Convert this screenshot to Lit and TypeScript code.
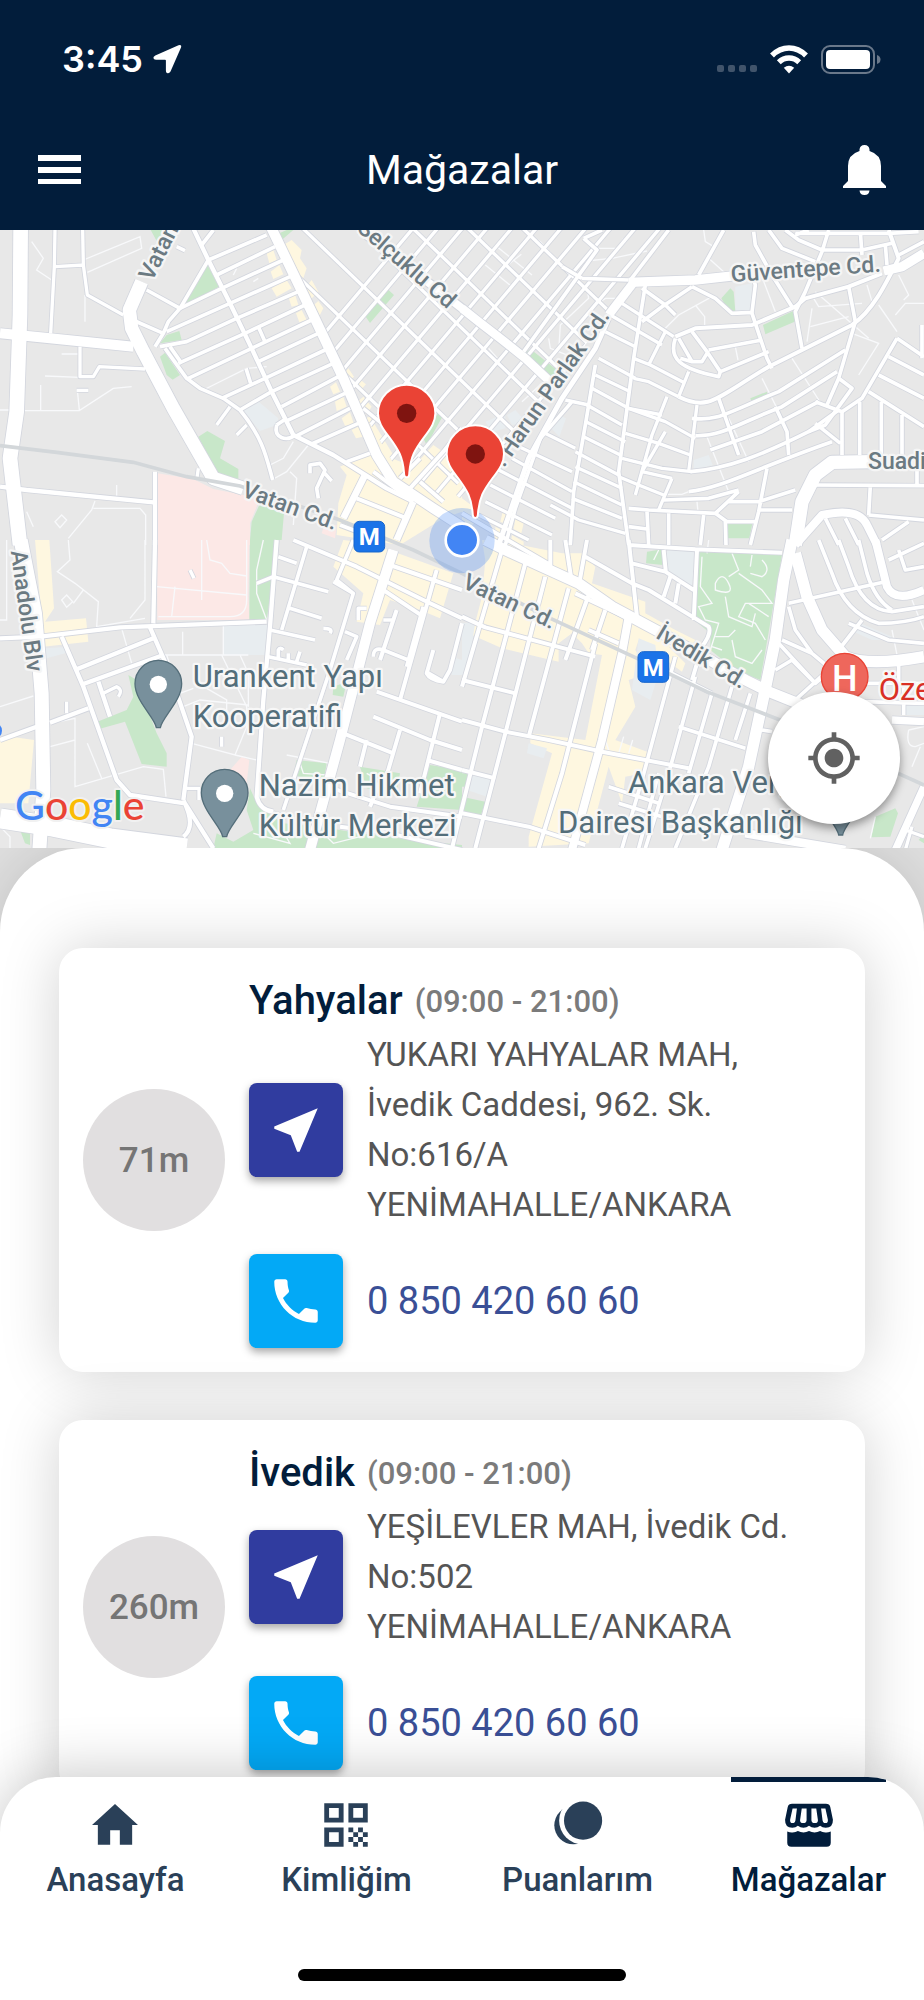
import { LitElement, html, css, svg } from "lit";
import { customElement, property } from "lit/decorators.js";

/* ---------- Map data: four sheets, three units per CSS pixel ---------- */

type Road = [width: number, d: string];
interface Sheet {
  x: number;
  y: number;
  green: string;
  sand: string;
  pink: string;
  ice: string;
  thin: string;
  roads: Road[];
}

const sheets: Sheet[] = [
  {
    x: 0,
    y: -15,
    green:
      "M452,15H485V35L470,48ZM545,245L620,115L657,185ZM480,355L500,330L538,318L545,345ZM480,395L495,383L540,450L518,464L500,450ZM595,635L622,618L675,648L660,700L715,732V762L650,745ZM785,825L855,830L845,945H750L755,890ZM838,25L860,15H880L845,45ZM1090,265L1160,190L1182,210L1110,294ZM1270,640L1320,555L1330,570L1280,660Z",
    sand:
      "M850,60L875,45L905,75L900,100L920,130L905,175ZM800,85L820,75L830,105L808,115ZM812,140L838,120L850,148L820,162ZM815,190L860,165L875,190L830,215ZM865,215L885,208L895,240L875,245ZM888,265L905,255L920,285L898,292ZM915,190L935,165L955,200L930,225ZM935,245L955,228L970,250L955,280ZM1030,450L1045,430L1062,455L1045,470ZM1062,480L1078,462L1098,478L1080,498ZM990,485L1008,472L1020,500L1000,508ZM1005,530L1030,515L1040,545L1010,558ZM1025,580L1050,562L1062,598L1035,602ZM1055,615L1075,605L1090,635L1068,640ZM1072,530L1090,515L1115,545L1098,570ZM1095,580L1110,575L1180,690L1150,710ZM1020,725L1105,685L1130,690L1175,700L1240,725L1300,660L1386,720V860L1330,880L1200,960L1010,930L1015,835L1040,750Z",
    pink: "M472,745L580,762L640,792L780,820L750,895V960H472ZM970,910L1010,900L1005,940L965,925Z",
    ice: "M722,550L770,525L835,580L830,600L780,618Z",
    thin: "M95,50L130,100L110,135L155,165M250,105L420,35L425,70L262,142M135,453L240,457M185,387H235M75,557H238L340,490L395,485M122,480V555M238,555L232,495M0,555H75M610,495L740,430L800,425M255,210V290M80,860L100,905M205,940L275,855L285,828M165,890L185,870L200,885L180,908ZM810,720L850,700L880,650M815,765L860,740L925,660M700,150L710,130M760,170L775,160M870,740L890,760L880,900M350,780V820M280,850H420L437,870V960",
    roads: [
      [44, "M62,0L60,270L50,560L30,700L60,960"],
      [30, "M0,325L150,340L400,365"],
      [40, "M425,170L388,255L395,310L430,380L520,550L640,760L730,790"],
      [30, "M810,0L930,250L1030,460L1130,690L1180,770L1300,850L1386,905"],
      [13, "M575,0L625,105L690,235L755,370L815,500L880,630L1000,690L1080,740L1160,790L1240,830"],
      [11, "M625,105L800,30M650,150L825,65M540,250L665,190L850,105M500,320L690,235L870,155M480,365L560,350L710,280L895,200M535,415L735,325L915,240M565,460L755,370L935,285M775,410L955,325M665,520L795,460L975,375M720,555L815,500L1000,415M845,545L1015,455M855,590L1035,505M885,635L1050,550M935,657L1075,595"],
      [11, "M625,105L540,250L505,290L490,325L465,365M495,370L560,460L600,490L670,520L720,555C790,640 800,700 818,765M440,195L540,250M405,288L490,325M775,305L795,350M738,430L752,475M510,365L545,415M605,60L640,15M530,65L555,77"],
      [10, "M165,15L163,125L152,325M248,15L250,120L262,210L370,270M165,125L250,120M240,365V455H280L298,425L435,432M230,496H265M650,600L690,545M710,630L740,600M595,730L590,765"],
      [13, "M0,785L80,795L460,832M465,740V960"],
      [11, "M830,600C820,640 860,650 885,630M830,600L860,580M930,745L930,720L960,715L975,735L950,790L955,820M970,740L995,768M1090,550L1200,640M1040,710L1110,685"],
      [20, "M1095,750L1030,880M1240,830L1190,945"],
      [12, "M1230,790L1330,680L1386,610M1200,760L1260,700M1120,740L1240,830M1070,820L1220,880M1260,770L1330,830M1020,900L1100,930"],
    ],
  },
  {
    x: 1386,
    y: -15,
    green:
      "M190,385L205,372L285,435L270,465ZM778,220L805,190L815,200L820,258L800,258ZM903,300L1000,255L998,290L910,328ZM865,520L915,500L918,520L870,535ZM792,890H872L862,940H798Z",
    sand: "M0,820L40,850L60,880L30,900L0,890ZM122,860L145,872L138,900L115,890ZM160,882L185,895L178,925L155,912ZM100,905L130,920L120,945H100ZM150,930L185,950V960H145Z",
    pink: "",
    ice: "M820,185L870,175L868,258H820ZM70,590L130,565L130,610L90,620ZM135,570L160,555L195,595L150,600ZM268,610L290,570L312,580L292,635ZM695,705L740,690L752,720L695,735Z",
    thin: "M180,15L235,50L300,120M105,65L210,150M130,125L178,88M370,108L450,100L555,78M410,70H465L485,40M375,190L380,220L295,300L290,380M400,240L430,220H480M70,120L150,185M725,15L730,50L755,65M740,100L790,145M700,240L728,275V300M610,310L650,270L750,215M890,130L940,260M1055,220L1070,245L1200,235M1050,250L1035,350M1045,305L1160,275M1250,240L1305,320M1215,180L1230,230M1060,200L1220,340M1170,325L1250,355L1190,450M1300,270L1330,235H1386M990,400L1080,540M900,460L950,560M800,580L860,710M735,635L800,800M820,365L828,405M610,808H660L680,800M705,830L708,860M80,370L115,410M260,340L265,370L340,400M180,530L240,475M1310,150L1340,210L1325,225",
    roads: [
      [26, "M0,250L50,290L115,340L190,400L270,475"],
      [28, "M500,172L700,165L820,152M1265,138L1320,125L1386,85"],
      [26, "M515,172L440,270"],
      [15, "M440,280L400,370L300,520L200,700L110,960"],
      [11, "M620,15L505,165M785,15L710,150M360,160L500,165M300,125L360,160M365,40L405,75L185,380M365,40L420,15"],
      [11, "M550,180L515,400L470,740L500,960M400,420L370,600L335,800L325,960M330,530L235,640L160,850L130,960M310,525L380,540"],
      [10, "M480,235L635,335M445,270L600,360M430,320L520,365M410,400L520,460M400,450L505,500M390,490L500,550L600,570M375,540L480,600M372,590L490,650M365,635L475,690M340,680L470,750M340,725L480,790M335,770L480,840M330,820L480,880M265,840L350,885L490,925"],
      [10, "M160,660L330,740M150,700L330,800M110,735L330,850M85,780L280,880M70,830L270,930M50,870L200,945M240,620L340,670"],
      [10, "M515,400L565,420L670,475M515,460L560,470L650,515M500,550L610,590L700,640M490,625L590,655L685,690M480,700L600,730L690,740M610,320L560,420M680,440L650,515M615,515L570,630L520,810M610,620L540,740M705,540L680,740M470,755L530,780L605,810M630,760L590,855M540,740L630,760"],
      [12, "M650,515C740,560 760,520 920,425L1170,300C1230,260 1270,180 1310,100L1280,15M640,335L700,310L870,300L1000,245L1030,220L1160,185L1260,145"],
      [11, "M690,580C770,590 800,560 950,500L1150,375M700,632C780,635 840,590 960,545L1125,440M745,675L900,620L1070,530M685,740C800,730 900,690 1040,620L1130,555M680,800C780,790 880,730 1110,650M605,825L740,820L830,795M500,850L560,855L760,865L830,800"],
      [11, "M540,190L610,240L640,270M690,185L600,245L540,290M690,185L760,220L810,265L870,262L880,180L865,130M870,265L915,400L930,430M740,375L900,345M690,320L735,380L775,440L920,380M640,340C620,400 650,430 770,455L775,440M650,340L690,410H720L735,385M655,400L690,410"],
      [11, "M875,20L880,60L930,150L990,245M920,15L960,70L1060,110M970,15L1010,45L1080,75L1200,75L1290,55M1000,30L1040,15M1100,15L1080,80L1030,200L1000,260L1020,370M1000,25H1280L1370,20M1195,20L1200,90M1270,60L1275,120M1310,90L1386,50"],
      [11, "M1160,185L1180,290L1130,460L1170,490L1090,600L1040,620M770,520L830,690M940,545L975,620L980,690M1060,530L1140,560M1060,595L1135,655M1130,460L1095,540M1140,560V690"],
      [11, "M1305,340L1200,520L1140,560M1305,340L1386,395M1280,395L1386,450M1250,450L1386,520M1220,500L1386,605M1193,530V690M1258,530V690M1320,570V690M1380,300V400"],
      [40, "M1000,960L1020,830L1060,750L1110,712L1230,710"],
      [24, "M1000,960L1080,870Q1190,845 1215,900L1245,960"],
      [11, "M1050,780L1386,782M1220,870L1386,885M1225,782L1220,870M890,830L1000,795M800,830H890M890,855H990M915,730L890,860L865,960M760,865L795,890H880M790,890L792,960M555,860L560,960M620,865V960M725,870L715,960M1090,880L1130,960M1150,880L1190,960M1340,890L1260,945M1365,730V785M500,905L555,912"],
    ],
  },
  {
    x: 0,
    y: 930,
    green:
      "M750,0H835L800,240H748ZM385,405L410,420L470,580L500,640V680L425,672L375,545L295,568L292,545L380,510L400,470ZM1000,440L1040,425L1030,470L998,465ZM890,660L980,670L970,730L880,705ZM750,745L775,800L850,850L960,860L1080,880L1240,900L1386,915V925H640L650,880L700,905L760,870L740,810ZM1290,675L1386,690V810L1250,800ZM1080,680L1200,700L1190,760L1100,745ZM60,870H90V915L75,910Z",
    sand: "M105,0H148L162,205L135,245L258,235L265,305L130,320L122,200ZM0,600L45,592L102,600L85,790H0ZM1030,0L1110,10L1250,60L1360,100L1320,235L1260,210L1170,180L1140,255L1070,245L1090,160L1000,80Z",
    pink: "M472,0H748L745,170L750,240H472ZM690,690L725,650L748,660L740,730Z",
    ice: "M672,255H805V345H672ZM135,325L210,320L195,340L130,358ZM1355,350L1386,360V405H1355Z",
    thin: "M205,0L210,60L172,95L225,130L295,185L290,260L435,235M250,150L220,190M185,180L200,165L218,185L200,202ZM435,0V180L390,235M470,140L740,165M525,140L515,230M475,230H690Q740,230 740,180V0M605,0V180M620,0L630,60L665,70L690,100L740,108M548,275V345M365,265L395,370M485,345H745M670,250V345M665,345L740,500V560L705,645L575,610M720,345L745,400V500M500,345L530,440M550,500L600,480L745,495M0,500L100,468M150,620L225,600M262,610L305,715M150,550L225,535V740L430,680L490,688L498,770M705,645L770,660M0,240H20V0M540,460L580,445M620,445L680,480V560M790,0L770,90V160L800,240M760,880L870,910L840,860M960,870L1000,910L1080,890M900,670L910,700L980,705M1100,700L1180,745M0,860L30,890V925M860,645L990,670",
    roads: [
      [42, "M62,0L105,220L125,460L130,750L118,930"],
      [60, "M0,835L160,860L330,895L560,925"],
      [13, "M465,0L460,250M0,295L120,290L360,262L800,245M185,290L250,440L350,720L390,765L555,790L640,925M450,262L510,400L575,590L550,780M230,388L460,295M250,432L490,345M295,425L330,530M150,548L265,505M0,600L110,560M550,780Q590,860 550,890"],
      [10, "M310,460L350,440Q370,450 355,470M200,485V520M570,90L582,115M665,590V620M597,750V780M560,745H600"],
      [13, "M830,0L810,260L790,480L770,770Q780,810 820,815"],
      [30, "M1180,30L1110,250L1020,600L930,930"],
      [11, "M835,50L890,70M770,130L820,110L985,155M870,205L965,235M810,270L945,300M805,350L920,375M920,20L845,270M1060,160L990,390L850,810M1000,125L1060,160L1010,120L1060,0M835,355V330Q840,320 850,330M865,360V340M890,365L900,335M970,265Q1000,265 990,280M1035,275L1070,290L1040,360M1120,350Q1120,320 1150,330L1225,360M1150,240H1180M1075,240V205H1100"],
      [12, "M880,0L1070,80L1270,180L1386,235M1170,75L1386,150M1150,150L1270,230M1190,210L1140,360M1310,90L1200,480M1270,200L1220,380M1285,400L1330,425L1350,390L1386,250M1300,330L1280,400Q1290,420 1330,425"],
      [12, "M1130,455L1386,545M1120,530L1290,600L1386,630M1030,580L1180,640M1200,570L1150,740M1320,520L1260,760M1100,600L1080,680M980,740L1170,800L1386,830M1280,660L1386,690M1150,700L1110,800M1020,860L1170,880L1386,930M820,820L860,830"],
    ],
  },
  {
    x: 1386,
    y: 930,
    green:
      "M712,35L960,45L895,420L820,390L745,330V280L690,235ZM555,35L600,28L602,75L552,70ZM0,770L70,785L55,830L0,815ZM1240,830L1300,805L1308,820L1285,890L1228,892ZM0,700H15V740H0ZM1370,900L1386,880V910Z",
    sand: "M60,0L150,10L300,40H360L400,80L390,130L550,185V220L640,270L700,300L680,330L620,320L670,370L660,395L530,300L520,330L560,400L500,420L520,500L460,600L555,635L545,700L490,710L480,790L440,680L380,910L200,920V890L270,640L205,610V580L370,600L420,345L380,340L360,310L330,280L290,310V365L120,325L30,285L60,170L70,60Z",
    pink: "",
    ice: "M615,30L700,25L690,145L612,100ZM1175,275L1195,250L1290,290L1280,300H1230ZM530,295L580,315L590,400L565,480L510,450ZM0,250L40,245L20,380L0,410ZM20,700L88,715L75,770L15,750ZM200,610L255,625L245,655L195,640ZM1330,490H1386V525H1330Z",
    thin: "M720,50L715,140L750,190L710,200L730,240L770,250L745,330M760,130Q780,90 800,130T760,150ZM800,110L830,90L810,40M830,100L900,150L930,190L850,190L830,230L880,250L910,300M790,170L800,230L870,260L880,220M920,230L860,190M865,80L870,45M900,60Q930,90 900,110L865,100M760,290L800,290L820,270M810,300L820,350L870,370L900,330M780,330L750,320M1340,570Q1330,620 1360,620L1386,610M1240,830L1225,895M590,30L575,60M430,600L440,630M470,640L485,590M500,640L512,600M740,0L735,40M1350,180L1386,270M1290,270L1310,370M1340,570L1386,560M1350,680L1375,620",
    roads: [
      [32, "M70,0L130,30L350,130L450,200L600,280L850,420L920,455L1020,495"],
      [34, "M990,0L965,120L940,300L905,470L860,680L780,930"],
      [34, "M1000,40L1035,170L1080,270L1150,350Q1220,380 1386,350"],
      [24, "M1240,0L1275,140Q1300,190 1386,150"],
      [11, "M1070,0L1110,100Q1150,220 1250,250Q1330,250 1386,230M1130,0L1160,80Q1200,210 1290,215L1386,200M1190,0L1215,100Q1240,180 1290,210M1310,30L1330,90L1386,80M1280,60L1386,10M980,190L1270,125M980,200L1000,270L1050,340L1110,390M1050,340L960,300M950,310L1060,430M940,390L990,360L1060,430L1130,370M1000,480L1110,380M1130,330L1200,240M1160,250L1280,300L1386,310M1180,430L1386,430M1200,485L1386,490M1310,370V430M1325,430V525"],
      [22, "M1290,540L1386,545M1386,740L1300,930"],
      [24, "M500,230L480,340L420,600L330,930"],
      [12, "M310,0L330,130M265,0V95M375,0L350,140M0,-80L265,75M370,50L510,130L560,150L740,260Q750,280 720,320L690,420M500,0L525,230M500,15L700,28L960,38M705,30L695,240M510,70L610,95L695,150M605,30L612,100M650,130L640,190M625,110L605,170"],
      [12, "M120,30L0,440M190,70L60,560L-30,925M250,110L130,580L40,925M320,145L200,590M380,165L310,360M430,210L390,330M400,310L300,700L230,925"],
      [12, "M0,230L70,262L250,310L400,350M0,420L160,460M0,540L130,575L260,600L420,635L680,685M0,690L100,715M0,820L200,860L370,915M380,270L470,310M340,160L500,235"],
      [11, "M640,350L540,720L480,925M700,410L620,700L550,925M750,460L680,700M810,440L740,680L640,925M865,460L820,600M630,400L750,460M650,560L850,625M590,790L440,740M470,790L600,830M590,700L530,925M900,570L930,575"],
      [26, "M850,880L1000,905L1150,930"],
      [10, "M1330,870L1386,890M1350,860L1330,930"],
    ],
  },
];

interface Label {
  x: number;
  y: number;
  turn: number;
  text: string;
}

const streetLabels: Label[] = [
  { x: 456, y: 156, turn: -63, text: "Vatan" },
  { x: 1068, y: 0, turn: 41, text: "Selçuklu Cd" },
  { x: 722, y: 798, turn: 20, text: "Vatan Cd." },
  { x: 2194, y: 156, turn: -4, text: "Güventepe Cd." },
  { x: 1512, y: 714, turn: -55, text: ". Harun Parlak Cd." },
  { x: 2604, y: 718, turn: 0, text: "Suadiye" },
  { x: 1384, y: 1072, turn: 25, text: "Vatan Cd." },
  { x: 1964, y: 1222, turn: 31, text: "İvedik Cd." },
  { x: 32, y: 964, turn: 82, text: "Anadolu Blv" },
];

const placeLabels: Label[] = [
  { x: 578, y: 1371, turn: 0, text: "Urankent Yapı" },
  { x: 578, y: 1490, turn: 0, text: "Kooperatifi" },
  { x: 776, y: 1698, turn: 0, text: "Nazim Hikmet" },
  { x: 776, y: 1817, turn: 0, text: "Kültür Merkezi" },
  { x: 1884, y: 1690, turn: 0, text: "Ankara Vergi" },
  { x: 1674, y: 1809, turn: 0, text: "Dairesi Başkanlığı" },
];

const redPin = (x: number, y: number) => svg`
  <g transform="translate(${x} ${y})">
    <path class="red-pin" d="M0,192C-6,192 -8,186 -8,178C-12,130 -24,110 -52,72C-74,44 -86,25 -86,0A86,86 0 0 1 86,0C86,25 74,44 52,72C24,110 12,130 8,178C8,186 6,192 0,192Z"/>
    <circle r="29" fill="#7f1410"/>
  </g>`;

const greyPin = (x: number, y: number) => svg`
  <g transform="translate(${x} ${y})">
    <path d="M-6,130C-10,100 -70,50 -70,-2A70,70 0 0 1 70,-2C70,50 10,100 6,130Z" fill="#78909c" stroke="#546e7a" stroke-width="4"/>
    <circle r="26" fill="#fff"/>
  </g>`;

const metro = (x: number, y: number) => svg`
  <g transform="translate(${x} ${y})">
    <rect x="-46" y="-46" width="92" height="92" rx="16" fill="#1a73e8" stroke="#1765cc" stroke-width="3"/>
    <text class="metro" y="26" text-anchor="middle">M</text>
  </g>`;

@customElement("store-map")
export class StoreMap extends LitElement {
  static styles = css`
    :host {
      display: block;
      position: relative;
      height: 618px;
      overflow: hidden;
      background: #e8e8e8;
    }
    .canvas {
      display: block;
      width: 100%;
      height: 100%;
      font-family: Roboto, sans-serif;
    }
    .casing {
      fill: none;
      stroke: #d3d6de;
      stroke-linejoin: round;
    }
    .road {
      fill: none;
      stroke: #fff;
      stroke-linejoin: round;
    }
    .thin {
      fill: none;
      stroke: #f8f9fb;
      stroke-width: 4px;
    }
    .rail {
      fill: none;
      stroke: #d3d7da;
      stroke-width: 11px;
    }
    .street {
      font-size: 69px;
      font-weight: 500;
      fill: #6b7a82;
      stroke: #f5f5f5;
      stroke-width: 14px;
      stroke-linejoin: round;
      paint-order: stroke;
    }
    .place {
      font-size: 93px;
      fill: #546e7a;
      stroke: #f7f7f7;
      stroke-width: 14px;
      stroke-linejoin: round;
      paint-order: stroke;
    }
    .hospital {
      fill: #d93025;
    }
    .metro {
      font-size: 72px;
      font-weight: 700;
      fill: #fff;
    }
    .ward {
      font-size: 108px;
      font-weight: 500;
      fill: #fff;
    }
    .brand {
      font-family: Lato, sans-serif;
      font-size: 123px;
      font-weight: 500;
      stroke: #f1f1f1;
      stroke-width: 12px;
      stroke-linejoin: round;
      paint-order: stroke;
    }
    .red-pin {
      fill: #ea4335;
      stroke: #fff;
      stroke-width: 6px;
    }
    .locate {
      position: absolute;
      right: 24px;
      bottom: 24px;
      display: grid;
      place-items: center;
      width: 132px;
      height: 132px;
      padding: 0;
      border: 0;
      border-radius: 50%;
      background: #fff;
      box-shadow: 0 4px 10px rgba(0, 0, 0, 0.4);
    }
  `;

  render() {
    return html`
      <svg class="canvas" viewBox="0 0 2772 1854" preserveAspectRatio="xMidYMid slice" role="img" aria-label="Mağaza haritası">
        ${sheets.map(
          (s) => svg`<g transform="translate(${s.x} ${s.y})">
            <path d=${s.sand} fill="#fef7e0"/>
            <path d=${s.pink} fill="#fce8e6"/>
            <path d=${s.ice} fill="#e8edf0"/>
            <path d=${s.green} fill="#c8e7c9"/>
            <path d=${s.thin} class="thin"/>
          </g>`
        )}
        <defs>
          <clipPath id="northeast">
            <path d="M830,0H2000L1820,250L1490,740L1386,850L1180,700L1020,430Z"/>
          </clipPath>
        </defs>
        <g clip-path="url(#northeast)">
          ${["casing", "road"].map(
            (kind) => svg`
              ${Array.from({ length: 22 }, (_, i) => {
                const x = 560 + i * 74;
                return svg`<path class=${kind} stroke-width=${kind === "road" ? 10 : 15} d="M${x},800L${x + 700},-30"/>`;
              })}
              ${Array.from({ length: 8 }, (_, i) => {
                const x = 210 + i * 165;
                return svg`<path class=${kind} stroke-width=${kind === "road" ? 10 : 15} d="M${x},-200L${x + 1000},760"/>`;
              })}`
          )}
        </g>
        ${["casing", "road"].map((kind) =>
          sheets.map(
            (s) => svg`<g transform="translate(${s.x} ${s.y})">
              ${s.roads.map(([w, d]) => svg`<path class=${kind} stroke-width=${kind === "road" ? w : w + 5} d=${d}/>`)}
            </g>`
          )
        )}
        <path class="casing" stroke-width="30" d="M1080,0L1386,235"/>
        <path class="road" stroke-width="24" d="M1080,0L1390,238"/>
        <path class="rail" d="M0,647L170,667L400,697L560,740L720,768L1020,870L1240,960L1386,1030L1640,1160L1900,1280L2120,1385L2340,1470L2772,1665"/>
        <circle cx="1386" cy="932" r="98" fill="#4285f4" opacity="0.28"/>
        ${streetLabels.map((l) => svg`<text class="street" transform="translate(${l.x} ${l.y}) rotate(${l.turn})">${l.text}</text>`)}
        ${metro(1108, 920)} ${metro(1960, 1311)}
        ${greyPin(475, 1363)} ${greyPin(674, 1690)} ${greyPin(2522, 1685)}
        ${placeLabels.map((l) => svg`<text class="place" x=${l.x} y=${l.y}>${l.text}</text>`)}
        <circle cx="2534" cy="1340" r="70" fill="#ee675c" stroke="#ea4335" stroke-width="4"/>
        <text class="ward" x="2534" y="1382" text-anchor="middle">H</text>
        <text class="place hospital" x="2636" y="1411">Özel</text>
        <circle cx="-18" cy="1502" r="24" fill="#4285f4"/>
        <circle cx="1386" cy="930" r="49" fill="#4285f4" stroke="#fff" stroke-width="8"/>
        ${redPin(1220, 550)} ${redPin(1426, 672)}
        <text class="brand" x="45" y="1770"><tspan fill="#4285f4">G</tspan><tspan fill="#ea4335">o</tspan><tspan fill="#fbbc04">o</tspan><tspan fill="#4285f4">g</tspan><tspan fill="#34a853">l</tspan><tspan fill="#ea4335">e</tspan></text>
      </svg>
      <button class="locate" aria-label="Konumum">
        <svg width="56" height="56" viewBox="0 0 24 24" fill="#616161">
          <path d="M12 8c-2.210 0-4 1.790-4 4s1.790 4 4 4 4-1.790 4-4-1.790-4-4-4zm8.940 3c-.46-4.170-3.770-7.480-7.940-7.940V1h-2v2.060C6.830 3.520 3.520 6.830 3.060 11H1v2h2.060c.46 4.170 3.770 7.480 7.940 7.940V23h2v-2.060c4.170-.46 7.480-3.770 7.940-7.940H23v-2h-2.060zM12 19c-3.870 0-7-3.130-7-7s3.130-7 7-7 7 3.130 7 7-3.130 7-7 7z"/>
        </svg>
      </button>
    `;
  }
}

@customElement("store-card")
export class StoreCard extends LitElement {
  @property() name = "";
  @property() hours = "";
  @property() distance = "";
  @property() address = "";
  @property() phone = "";

  static styles = css`
    :host {
      display: flex;
      align-items: center;
      gap: 24px;
      padding: 24px;
      border-radius: 24px;
      background: #fff;
      box-shadow: 0 0 60px rgba(0, 0, 0, 0.18);
    }
    .distance {
      flex: none;
      display: grid;
      place-items: center;
      width: 142px;
      height: 142px;
      border-radius: 50%;
      background: #e1dfe0;
      color: #757575;
      font-size: 35px;
      font-weight: 500;
    }
    .details {
      flex: 1;
      min-width: 0;
    }
    .heading {
      display: flex;
      align-items: center;
      gap: 12px;
      height: 58px;
    }
    .name {
      margin: 0;
      color: #021d3b;
      font-size: 40px;
      line-height: 48px;
      font-weight: 500;
    }
    .hours {
      color: #7b7b7b;
      font-size: 31px;
      font-weight: 500;
    }
    .row {
      display: flex;
      align-items: center;
      gap: 24px;
    }
    .row + .row {
      margin-top: 24px;
    }
    .action {
      flex: none;
      display: grid;
      place-items: center;
      width: 94px;
      height: 94px;
      padding: 0;
      border: 0;
      border-radius: 8px;
      box-shadow: 0 4px 8px rgba(0, 0, 0, 0.35);
    }
    .go {
      background: #303c9f;
    }
    .call {
      background: #03a9f6;
    }
    .address {
      margin: 0;
      color: #555;
      font-size: 33px;
      line-height: 50px;
      white-space: pre-line;
    }
    .phone {
      color: #3a4f96;
      font-size: 38px;
      text-decoration: none;
    }
  `;

  render() {
    return html`
      <div class="distance">${this.distance}</div>
      <div class="details">
        <div class="heading">
          <h2 class="name">${this.name}</h2>
          <span class="hours">(${this.hours})</span>
        </div>
        <div class="row">
          <button class="action go" aria-label="Yol tarifi">
            <svg width="58" height="58" viewBox="0 0 24 24" fill="#fff">
              <path d="M21 3L3 10.530v.98l6.840 2.650L12.480 21h.98L21 3z"/>
            </svg>
          </button>
          <p class="address">${this.address}</p>
        </div>
        <div class="row">
          <button class="action call" aria-label="Ara">
            <svg width="58" height="58" viewBox="0 0 24 24" fill="#fff">
              <path d="M6.620 10.790c1.440 2.830 3.760 5.140 6.590 6.590l2.200-2.200c.27-.27.67-.36 1.020-.24 1.120.37 2.330.57 3.570.57.55 0 1 .45 1 1V20c0 .55-.45 1-1 1-9.390 0-17-7.610-17-17 0-.55.45-1 1-1h3.500c.55 0 1 .45 1 1 0 1.250.2 2.450.57 3.570.11.35.03.74-.25 1.020l-2.200 2.200z"/>
            </svg>
          </button>
          <a class="phone" href="tel:${this.phone.replace(/ /g, "")}">${this.phone}</a>
        </div>
      </div>
    `;
  }
}

const stores = [
  {
    name: "Yahyalar",
    hours: "09:00 - 21:00",
    distance: "71m",
    address: "YUKARI YAHYALAR MAH,\nİvedik Caddesi, 962. Sk.\nNo:616/A\nYENİMAHALLE/ANKARA",
    phone: "0 850 420 60 60",
  },
  {
    name: "İvedik",
    hours: "09:00 - 21:00",
    distance: "260m",
    address: "YEŞİLEVLER MAH, İvedik Cd.\nNo:502\nYENİMAHALLE/ANKARA",
    phone: "0 850 420 60 60",
  },
];

const tabs = [
  {
    label: "Anasayfa",
    icon: svg`<path d="M12 3.300L21.500 12H19.100V20.200H14V14.200H10V20.200H4.900V12H2.500Z"/>`,
  },
  {
    label: "Kimliğim",
    icon: svg`<path fill-rule="evenodd" d="M3 3h8v8H3zM5 5v4h4V5zM13 3h8v8h-8zM15 5v4h4V5zM3 13h8v8H3zM5 15v4h4v-4zM13 13h2v2h-2zM17 13h2v2h-2zM15 15h2v2h-2zM19 15h2v2h-2zM13 17h2v2h-2zM17 17h2v2h-2zM15 19h2v2h-2zM19 19h2v2h-2z"/>`,
  },
  {
    label: "Puanlarım",
    icon: svg`<circle cx="10.100" cy="12.100" r="7.900"/><circle cx="14.100" cy="10.200" r="9.900" fill="#fff"/><circle cx="14.100" cy="10.200" r="7.900"/>`,
  },
  {
    label: "Mağazalar",
    icon: svg`<path fill-rule="evenodd" d="M5 3.200H19Q20.500 3.200 20.800 4.500L21.900 9.800Q22 13.100 18.900 13.100Q17.500 13.100 16.600 12.300Q15.600 13.100 14.300 13.100T12 12.300Q11 13.100 9.700 13.100T7.400 12.300Q6.500 13.100 5.100 13.100Q2 13.100 2.100 9.800L3.200 4.500Q3.500 3.200 5 3.200ZM5.200 5.200L4.200 9.700Q4 11.200 5.200 11.200Q6.200 11.200 6.400 10L7 5.200ZM9 5.200L8.300 10Q8.300 11.200 9.600 11.200Q10.900 11.200 11 10V5.200ZM13 5.200V10Q13.100 11.200 14.400 11.200Q15.700 11.200 15.700 10L15 5.200ZM17 5.200L17.600 10Q17.800 11.200 18.800 11.200Q20 11.200 19.800 9.700L18.800 5.200ZM3 14.700Q4.200 15.200 5.200 15.100Q6.500 15.100 7.400 14.500Q8.500 15.100 9.700 15.100T12 14.500Q13.100 15.100 14.300 15.100T16.600 14.500Q17.500 15.100 18.800 15.100Q19.800 15.200 21 14.700V19.300Q21 21 19.300 21H4.700Q3 21 3 19.300Z"/>`,
    active: true,
  },
];

@customElement("app-root")
export class AppRoot extends LitElement {
  static styles = css`
    :host {
      position: relative;
      display: flex;
      flex-direction: column;
      height: 100vh;
      overflow: hidden;
      background: #dedede;
      color: #021d3b;
      font-family: Roboto, sans-serif;
    }
    .top {
      flex: none;
      background: #021d3b;
      color: #fff;
    }
    .status {
      display: flex;
      align-items: center;
      box-sizing: border-box;
      height: 110px;
      padding: 8px 43px 0 62px;
    }
    .clock {
      margin-right: 10px;
      font-family: Inter, sans-serif;
      font-size: 36px;
      font-weight: 600;
    }
    .dots {
      display: flex;
      gap: 4px;
      margin: 18px 13px 0 auto;
    }
    .dot {
      width: 7px;
      height: 7px;
      border-radius: 2px;
      background: #41546b;
    }
    .wifi {
      margin-right: 13px;
    }
    .bar {
      display: flex;
      align-items: center;
      justify-content: space-between;
      height: 120px;
      padding: 0 38px;
    }
    .title {
      margin: 0;
      font-size: 41px;
      font-weight: 400;
    }
    .icon-button {
      display: grid;
      padding: 0;
      border: 0;
      background: none;
    }
    .map {
      flex: none;
    }
    .sheet {
      flex: 1;
      display: flex;
      flex-direction: column;
      gap: 48px;
      min-height: 0;
      padding: 100px 59px 0;
      overflow: hidden;
      border-radius: 84px 84px 0 0;
      background: #fff;
      box-shadow: 0 0 50px rgba(0, 0, 0, 0.12);
    }
    .card {
      flex: none;
    }
    .nav {
      position: absolute;
      inset: auto 0 0;
      border-radius: 56px 56px 0 0;
      background: #fff;
      box-shadow: 0 0 60px rgba(0, 0, 0, 0.24);
      overflow: hidden;
    }
    .tabs {
      display: grid;
      grid-template-columns: repeat(4, 1fr);
      justify-items: center;
      height: 192px;
    }
    .tab {
      box-sizing: border-box;
      display: flex;
      flex-direction: column;
      align-items: center;
      height: 136px;
      padding-top: 14px;
      border-top: 5px solid transparent;
      color: #2a4058;
      font-size: 33px;
      line-height: 52px;
      font-weight: 500;
      text-decoration: none;
    }
    .active {
      border-top-color: #021d3b;
      color: #021d3b;
    }
    .home-bar {
      width: 328px;
      height: 12px;
      margin: 0 auto 19px;
      border-radius: 6px;
      background: #000;
    }
  `;

  render() {
    return html`
      <header class="top">
        <div class="status">
          <span class="clock">3:45</span>
          <svg width="29" height="30" viewBox="0 0 29 30" fill="#fff">
            <path d="M25.500 1.200Q29 .2 28 3.500L17.500 27.500Q16 30 14 29Q12.800 28.500 12.900 26.500V16.500Q12.900 15.700 12 15.700H3Q.6 15.700.4 14Q.2 12.500 2.300 11.400Z"/>
          </svg>
          <div class="dots"><i class="dot"></i><i class="dot"></i><i class="dot"></i><i class="dot"></i></div>
          <svg class="wifi" width="38" height="29" viewBox="0 0 38 29" fill="none" stroke="#fff" stroke-width="5.500">
            <path d="M2 10.500Q9.500 3 19 3T36 10.500"/>
            <path d="M8.800 17.200Q13.200 13 19 13T29.200 17.200"/>
            <path d="M19 28.500L13.800 22.800Q19 18.600 24.200 22.800Z" fill="#fff" stroke="none"/>
          </svg>
          <svg width="60" height="29" viewBox="0 0 60 29">
            <rect x="1" y="1" width="52" height="27" rx="8" fill="none" stroke="#6a788a" stroke-width="2"/>
            <rect x="5" y="5" width="44" height="19" rx="4" fill="#fff"/>
            <path d="M56 10Q59.500 11 59.500 14.500T56 19Z" fill="#6a788a"/>
          </svg>
        </div>
        <div class="bar">
          <button class="icon-button" aria-label="Menü">
            <svg width="43" height="30" viewBox="0 0 43 30" fill="#fff">
              <path d="M0 0H43V6H0ZM0 12H43V18H0ZM0 24H43V29H0Z"/>
            </svg>
          </button>
          <h1 class="title">Mağazalar</h1>
          <button class="icon-button" aria-label="Bildirimler">
            <svg width="43" height="50" viewBox="0 0 43 50" fill="#fff">
              <path d="M16.500 6V4.500Q17 0 21.500 0T26.500 4.500V6Q38 9.500 38 21V36L43 41V43H0V41L5 36V21Q5 9.500 16.500 6ZM16.500 45.500H26.500Q26 50 21.500 50T16.500 45.500Z"/>
            </svg>
          </button>
        </div>
      </header>
      <store-map class="map"></store-map>
      <main class="sheet">
        ${stores.map(
          (s) => html`<store-card
            class="card"
            .name=${s.name}
            .hours=${s.hours}
            .distance=${s.distance}
            .address=${s.address}
            .phone=${s.phone}
          ></store-card>`
        )}
      </main>
      <nav class="nav">
        <div class="tabs">
          ${tabs.map(
            (t) => html`<a class="tab ${t.active ? "active" : ""}" href="#">
              <svg width="58" height="58" viewBox="0 0 24 24" fill="currentColor">${t.icon}</svg>
              ${t.label}
            </a>`
          )}
        </div>
        <div class="home-bar"></div>
      </nav>
    `;
  }
}
